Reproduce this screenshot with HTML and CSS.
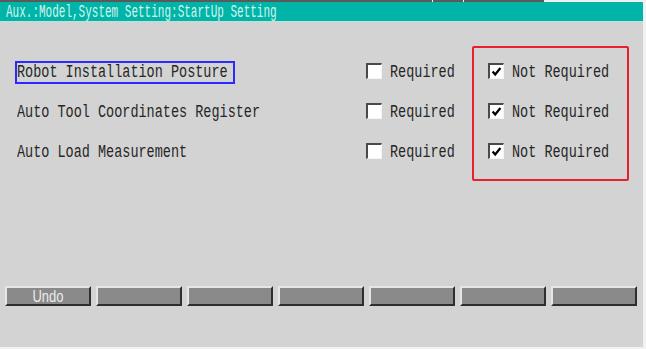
FILE: index.html
```html
<!DOCTYPE html>
<html lang="en">
<head>
    <meta charset="UTF-8">
    <meta name="viewport" content="width=device-width, initial-scale=1.0">
    <title>StartUp Setting</title>
    <link rel="stylesheet" href="styles.css">
</head>
<body>
    <div class="screen">
        <div class="topstrip">
            <span class="seg seg-a"></span>
            <span class="seg seg-b"></span>
            <span class="seg seg-c"></span>
        </div>
        <div class="title"><span class="tt">Aux.:Model,System Setting:StartUp Setting</span></div>
        <div class="content">
            <div class="main">
                <div class="left">
                    <div class="row">
                        <div class="label"><span class="focus"><span class="tx">Robot Installation Posture</span></span></div>
                        <div class="opt"><span class="box"></span><span class="tx">Required</span></div>
                    </div>
                    <div class="row">
                        <div class="label"><span class="tx">Auto Tool Coordinates Register</span></div>
                        <div class="opt"><span class="box"></span><span class="tx">Required</span></div>
                    </div>
                    <div class="row">
                        <div class="label"><span class="tx">Auto Load Measurement</span></div>
                        <div class="opt"><span class="box"></span><span class="tx">Required</span></div>
                    </div>
                </div>
                <div class="marked">
                    <div class="row">
                        <div class="opt"><span class="box"><svg viewBox="0 0 15 15"><path d="M3 7.5 L6 11 L12 3.5" /></svg></span><span class="tx">Not Required</span></div>
                    </div>
                    <div class="row">
                        <div class="opt"><span class="box"><svg viewBox="0 0 15 15"><path d="M3 7.5 L6 11 L12 3.5" /></svg></span><span class="tx">Not Required</span></div>
                    </div>
                    <div class="row">
                        <div class="opt"><span class="box"><svg viewBox="0 0 15 15"><path d="M3 7.5 L6 11 L12 3.5" /></svg></span><span class="tx">Not Required</span></div>
                    </div>
                </div>
            </div>
            <div class="buttons">
                <button class="fkey"><span class="tx">Undo</span></button>
                <button class="fkey"></button>
                <button class="fkey"></button>
                <button class="fkey"></button>
                <button class="fkey"></button>
                <button class="fkey"></button>
                <button class="fkey"></button>
            </div>
        </div>
    </div>
</body>
</html>
```

FILE: styles.css
```css
body {
    margin: 0;
    padding: 0;
    background-color: #f2f2f2;
    font-family: "Liberation Mono", "DejaVu Sans Mono", monospace;
}

.screen {
    width: 643px;
    height: 347px;
    display: flex;
    flex-direction: column;
}

.topstrip {
    height: 2px;
    display: flex;
    background-color: #f0f0f0;
}

.seg {
    height: 2px;
    background-color: #5a5a5a;
    margin-right: 1px;
}

.seg-a { width: 432px; }
.seg-b { width: 30px; }
.seg-c { width: 80px; }

.title {
    height: 19px;
    line-height: 19px;
    background-color: #00b4a8;
    padding-left: 6px;
    border-bottom: 1px solid #bfe0dc;
}

.tt {
    display: inline-block;
    font-size: 11px;
    color: #d4f4ef;
    transform: scaleY(1.65);
    white-space: nowrap;
}

.content {
    flex: 1;
    background-color: #d3d3d3;
    display: flex;
    flex-direction: column;
}

.main {
    display: flex;
    margin-top: 24px;
}

.left {
    padding-top: 6px;
}

.row {
    height: 40px;
    display: flex;
    align-items: center;
}

.label {
    width: 349px;
    padding-left: 17px;
}

.tx {
    display: inline-block;
    font-size: 13.5px;
    color: #262626;
    transform: scaleY(1.42);
    white-space: nowrap;
}

.focus {
    display: inline-block;
    width: 216px;
    height: 19px;
    line-height: 19px;
    margin-left: -2px;
    border: 2px solid #2a2aff;
}

.opt {
    display: flex;
    align-items: center;
    width: 106px;
}

.box {
    width: 13px;
    height: 13px;
    border-top: 2px solid #4a4a4a;
    border-left: 2px solid #4a4a4a;
    border-right: 1px solid #f4f4f4;
    border-bottom: 1px solid #f4f4f4;
    background-color: #ffffff;
    margin-right: 8px;
    margin-top: -2px;
}

.box svg {
    display: block;
    width: 13px;
    height: 13px;
}

.box path {
    fill: none;
    stroke: #000000;
    stroke-width: 2.6;
}

.marked {
    width: 139px;
    height: 127px;
    padding-top: 4px;
    padding-left: 14px;
    border: 2px solid #e8202c;
    border-radius: 2px;
}

.marked .opt {
    width: 130px;
}

.buttons {
    display: flex;
    gap: 5px;
    padding: 0 5px;
    margin-top: auto;
    margin-bottom: 41px;
}

.fkey {
    width: 86px;
    height: 20px;
    padding: 0;
    background-color: #8a8a8a;
    border-top: 2px solid #e6e6e6;
    border-left: 2px solid #e6e6e6;
    border-right: 2px solid #2e2e2e;
    border-bottom: 2px solid #2e2e2e;
    border-radius: 0;
}

.fkey .tx {
    color: #ececec;
    font-size: 13px;
    transform: scaleY(1.3);
}
```
